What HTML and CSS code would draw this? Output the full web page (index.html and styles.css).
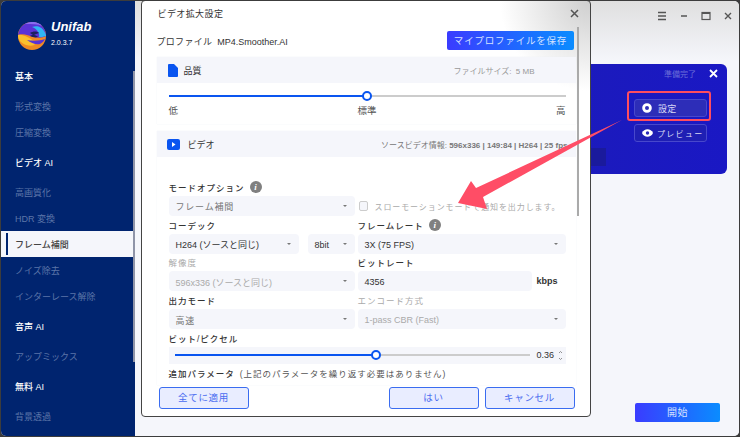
FILE: index.html
```html
<!DOCTYPE html>
<html lang="ja">
<head>
    <meta charset="UTF-8">
    <meta name="viewport" content="width=device-width, initial-scale=1.0">
    <title>Unifab</title>
    <link rel="stylesheet" href="styles.css">
</head>
<body>
    <div class="app">
        <!-- sidebar -->
        <div class="side">
            <div class="logo">
                <svg class="logo-mark" width="28" height="28" viewBox="0 0 28 28">
                    <circle cx="14" cy="14" r="14" fill="#f08a24"/>
                    <path d="M0 13C1 5 7 0 14 0c8 0 14 6 14 14-3 2-8 2-12 1-5-1-11-4-16-2z" fill="#5b33d6"/>
                    <path d="M7 2c5-3 13-3 17 2-4-2-10-2-17-2z" fill="#8a6cf0"/>
                    <path d="M14 5c6-2 11 0 14 8v1c-3 1-5 1-7 1 1-4-2-8-7-10z" fill="#2fb6f4"/>
                    <path d="M0 13c5-1 9 2 13 4 2 1 5 3 4 5-1 2-5 2-9 1-5-2-8-5-8-10z" fill="#fbc02d"/>
                    <path d="M9 18c5 1 13 1 18-1-1 2-3 4-5 5-4 1-9-1-13-4z" fill="#5b33d6"/>
                    <path d="M12 11c3-2 7-2 9 0-2 1-4 1-5 2 2 0 3 1 4 2-3 1-6 0-8-1 1-1 2-1 3-1-1-1-2-1-3-2z" fill="#1d2060"/>
                </svg>
                <div>
                    <div class="logo-name">Unifab</div>
                    <div class="logo-ver">2.0.3.7</div>
                </div>
            </div>
            <div class="side-head">基本</div>
            <div class="side-item">形式変換</div>
            <div class="side-item">圧縮変換</div>
            <div class="side-head">ビデオ AI</div>
            <div class="side-item">高画質化</div>
            <div class="side-item">HDR 変換</div>
            <div class="side-item active">フレーム補間</div>
            <div class="side-item">ノイズ除去</div>
            <div class="side-item">インターレース解除</div>
            <div class="side-head">音声 AI</div>
            <div class="side-item">アップミックス</div>
            <div class="side-head">無料 AI</div>
            <div class="side-item">背景透過</div>
            <div class="side-scroll"></div>
        </div>

        <!-- main -->
        <div class="main">
            <div class="titlebar">
                <svg width="10" height="10" viewBox="0 0 10 10"><path d="M1 1.5h8M1 5h8M1 8.5h8" stroke="#555" stroke-width="1.4"/></svg>
                <svg width="10" height="10" viewBox="0 0 10 10"><path d="M2 5h6" stroke="#555" stroke-width="1.4"/></svg>
                <svg width="10" height="10" viewBox="0 0 10 10"><rect x="1" y="1.5" width="8" height="7" fill="none" stroke="#555" stroke-width="1.2"/><path d="M1 2h8" stroke="#555" stroke-width="2"/></svg>
                <svg width="10" height="10" viewBox="0 0 10 10"><path d="M2 2l6 6M8 2l-6 6" stroke="#555" stroke-width="1.4"/></svg>
            </div>
            <div class="job">
                <div class="job-bar"></div>
                <div class="job-right">
                    <div class="job-top">
                        <span>準備完了</span>
                        <svg width="9" height="9" viewBox="0 0 9 9"><path d="M1 1l7 7M8 1l-7 7" stroke="#fff" stroke-width="1.8"/></svg>
                    </div>
                    <div class="job-btn">
                        <svg width="10" height="10" viewBox="0 0 10 10"><circle cx="5" cy="5" r="3.4" fill="none" stroke="#fff" stroke-width="2.8"/></svg>
                        <span>設定</span>
                    </div>
                    <div class="job-btn preview">
                        <svg width="11" height="8" viewBox="0 0 11 8"><path d="M0 4c2-5 9-5 11 0-2 5-9 5-11 0z" fill="#fff"/><circle cx="5.5" cy="4" r="1.7" fill="#2a2ab8"/></svg>
                        <span>プレビュー</span>
                    </div>
                </div>
            </div>
            <div class="start-row"><div class="start">開始</div></div>
        </div>

        <!-- dialog -->
        <div class="dialog">
            <div class="dlg-title">
                <span>ビデオ拡大設定</span>
                <svg width="9" height="9" viewBox="0 0 9 9"><path d="M1 1l7 7M8 1l-7 7" stroke="#555" stroke-width="1.5"/></svg>
            </div>
            <div class="profile">
                <span><span class="spaced">プロファイル</span>&nbsp; MP4.Smoother.AI</span>
                <div class="save">マイプロファイルを保存</div>
            </div>

            <div class="panel">
                <div class="panel-head">
                    <svg width="10" height="13" viewBox="0 0 10 13"><path d="M1 0h5l4 4v8a1 1 0 0 1-1 1H1a1 1 0 0 1-1-1V1a1 1 0 0 1 1-1z" fill="#0a55f0"/></svg>
                    <span class="panel-name">品質</span>
                    <span class="panel-info">ファイルサイズ: &nbsp;5 MB</span>
                </div>
                <div class="quality">
                    <div class="track"><div class="fill q-fill"></div><div class="thumb"></div></div>
                    <div class="scale"><span>低</span><span>標準</span><span>高</span></div>
                </div>
            </div>

            <div class="panel video">
                <div class="panel-head">
                    <svg width="13" height="11" viewBox="0 0 13 11"><rect width="13" height="11" rx="2" fill="#0a55f0"/><path d="M5 3l3.5 2.5L5 8z" fill="#fff"/></svg>
                    <span class="panel-name">ビデオ</span>
                    <span class="panel-info source">ソースビデオ情報: <b>596x336 | 149:84 | H264 | 25 fps</b></span>
                </div>
                <div class="form">
                    <div class="label">モードオプション <i class="info">i</i></div>
                    <div></div>
                    <div class="select dim"><span>フレーム補間</span></div>
                    <div class="check-row">
                        <span class="check"></span>
                        <span>スローモーションモードで通知を出力します。</span>
                    </div>

                    <div class="label">コーデック</div>
                    <div class="label">フレームレート <i class="info">i</i></div>
                    <div class="pair">
                        <div class="select grow"><span>H264 (ソースと同じ)</span></div>
                        <div class="select bit"><span>8bit</span></div>
                    </div>
                    <div class="select"><span>3X (75 FPS)</span></div>

                    <div class="label off">解像度</div>
                    <div class="label">ビットレート</div>
                    <div class="select off"><span>596x336 (ソースと同じ)</span></div>
                    <div class="pair">
                        <div class="input">4356</div>
                        <span class="unit">kbps</span>
                    </div>

                    <div class="label">出力モード</div>
                    <div class="label off">エンコード方式</div>
                    <div class="select dim"><span>高速</span></div>
                    <div class="select off"><span>1-pass CBR (Fast)</span></div>

                    <div class="label wide">ビット/ピクセル</div>
                    <div class="bpp wide">
                        <div class="track"><div class="fill b-fill"></div><div class="thumb"></div></div>
                        <span class="bpp-val">0.36</span>
                        <svg width="5" height="11" viewBox="0 0 5 11"><path d="M1 3l1.500-1.500L4 3M1 8l1.500 1.500L4 8" fill="none" stroke="#777" stroke-width="0.8"/></svg>
                    </div>
                    <div class="label wide extra">追加パラメータ <em>(上記のパラメータを繰り返す必要はありません)</em></div>
                </div>
            </div>
            <div class="dlg-scroll"></div>
            <div class="dlg-foot">
                <div class="ghost">全てに適用</div>
                <div class="foot-right">
                    <div class="ghost">はい</div>
                    <div class="ghost">キャンセル</div>
                </div>
            </div>
        </div>

        <!-- annotations -->
        <div class="mark"></div>
        <svg class="arrow" width="740" height="437" viewBox="0 0 740 437">
            <polygon points="458,203 471,181 476,188 622,120 483,197 487,209" fill="#ff4d66"/>
        </svg>
    </div>
</body>
</html>
```

FILE: styles.css
```css
* {
    padding: 0;
    margin: 0;
    box-sizing: border-box;
}
body {
    width: 740px;
    height: 437px;
    overflow: hidden;
    background: #3c3c3c;
    font-family: "Liberation Sans", "Noto Sans CJK JP", sans-serif;
    font-size: 9px;
    color: #333;
}
.app {
    position: relative;
    display: flex;
    width: 738px;
    height: 435px;
    margin: 1px;
    border-radius: 5px;
    overflow: hidden;
    background: #f5f6fb;
}

/* sidebar */
.side {
    position: relative;
    flex: none;
    width: 134px;
    padding-top: 13px;
    background: #00246f;
    color: #5c75a8;
}
.logo {
    position: relative;
    display: flex;
    align-items: center;
    gap: 5px;
    height: 45px;
    padding-left: 17px;
    color: #fff;
}
.logo-mark {
    flex: none;
    margin-top: -2px;
}
.logo-name {
    margin-top: -7px;
    font: italic bold 13px "Liberation Sans", sans-serif;
    line-height: 14px;
}
.logo-ver {
    margin-top: 5px;
    font: 7px "Liberation Sans", sans-serif;
}
.side-head {
    display: flex;
    align-items: center;
    height: 34px;
    padding-left: 14px;
    color: #fff;
    font-weight: 500;
}
.side-item {
    display: flex;
    align-items: center;
    height: 26px;
    padding-left: 14px;
}
.side-item.active {
    position: relative;
    margin-right: 1px;
    background: #f5f6fb;
    color: #444;
    font-weight: 500;
}
.side-item.active::before {
    content: "";
    position: absolute;
    left: 5px;
    top: 2px;
    width: 2px;
    height: 22px;
    background: #00246f;
}
.side-scroll {
    position: absolute;
    right: 0;
    top: 70px;
    width: 2px;
    height: 291px;
    background: #8f94a8;
}

/* main */
.main {
    flex: 1;
    display: flex;
    flex-direction: column;
    background: linear-gradient(#dfdfdf 0, #f5f6fb 60px);
}
.titlebar {
    display: flex;
    justify-content: flex-end;
    gap: 12px;
    height: 63px;
    padding: 10px 6px 0 0;
}
.job {
    display: flex;
    justify-content: flex-end;
    height: 110px;
    margin-right: 12px;
    margin-left: 290px;
    border-radius: 0 6px 6px 0;
    background: linear-gradient(90deg, #1d1db5, #1a18c4);
}
.job-bar {
    flex: 1;
    height: 18px;
    margin-top: 84px;
    margin-right: 28px;
    background: #1a1a9c;
}
.job-right {
    width: 93px;
    padding-right: 20px;
}
.job-top {
    display: flex;
    justify-content: space-between;
    align-items: center;
    height: 18px;
    margin: 0 -11px 17px 30px;
    color: #6a6ed8;
    font-size: 8px;
    white-space: nowrap;
}
.job-btn {
    display: flex;
    align-items: center;
    gap: 6px;
    width: 73px;
    height: 18px;
    margin-bottom: 7px;
    padding-left: 7px;
    border: 1px solid #4848cc;
    border-radius: 3px;
    background: #2d2db8;
    color: #d8d8f5;
    letter-spacing: 0.2px;
    white-space: nowrap;
}
.job-btn svg {
    flex: none;
}
.preview {
    gap: 4px;
    font-size: 8px;
    letter-spacing: 1.3px;
    background: #1f1fb4;
}
.start-row {
    display: flex;
    justify-content: flex-end;
    margin-top: auto;
    padding: 0 19px 14px 0;
}
.start {
    width: 85px;
    height: 19px;
    border-radius: 2px;
    background: linear-gradient(90deg, #3a3cff, #0a8cff);
    color: #d5e2ff;
    text-align: center;
    font-size: 10px;
    letter-spacing: 0.5px;
    line-height: 19px;
}

/* dialog */
.dialog {
    position: absolute;
    left: 140px;
    top: -1px;
    width: 450px;
    height: 417px;
    padding: 0 14px 0 14.5px;
    background: radial-gradient(circle at 100% 0, #cfcfcf 0, #fff 90px);
    border: 1.5px solid #444;
    border-radius: 4px;
}
.dlg-title {
    display: flex;
    justify-content: space-between;
    align-items: center;
    height: 25px;
    padding-left: 1px;
    letter-spacing: 0.4px;
}
.dlg-title svg {
    margin-right: -3px;
}
.profile {
    display: flex;
    justify-content: space-between;
    align-items: center;
    height: 20px;
    margin-top: 5px;
    padding-right: 2px;
}
.spaced {
    letter-spacing: 0.3px;
}
.save {
    width: 127px;
    height: 19px;
    margin-top: -1px;
    border-radius: 2px;
    background: linear-gradient(90deg, #3a3cff, #0a8cff);
    color: #d5e2ff;
    text-align: center;
    font-size: 9.5px;
    letter-spacing: 0.8px;
    line-height: 19px;
}
.panel {
    width: 419px;
    margin-top: 6px;
    box-shadow: 0 0 1px #e8e9f0;
}
.panel-head {
    display: flex;
    align-items: center;
    gap: 6px;
    height: 26px;
    padding-left: 11px;
    background: #f5f6fb;
}
.panel-name {
    padding-top: 1px;
}
.panel-info {
    margin-left: auto;
    padding-right: 41px;
    color: #999;
    font-size: 8px;
}
.panel-info.source {
    padding-right: 8px;
    color: #777;
    white-space: nowrap;
}
.quality {
    height: 41px;
    padding: 12px 10px 0 12px;
}
.track {
    position: relative;
    height: 2px;
    background: #ccc;
}
.fill {
    position: absolute;
    left: 0;
    top: 0;
    height: 2px;
    background: #0a55f0;
}
.thumb {
    position: absolute;
    top: -4px;
    width: 10px;
    height: 10px;
    border: 2px solid #0a55f0;
    border-radius: 50%;
    background: #fff;
}
.q-fill {
    width: 198px;
}
.quality .thumb {
    left: 193px;
}
.scale {
    display: flex;
    justify-content: space-between;
    margin-top: 6px;
    color: #555;
    font-size: 9.5px;
}
.video {
    height: 254px;
    margin-top: 7px;
    overflow: hidden;
}
.video .panel-head {
    gap: 8px;
    padding-left: 10px;
}
.form {
    display: grid;
    grid-template-columns: 186px 208px;
    column-gap: 3px;
    grid-auto-rows: min-content;
    padding: 21px 0 0 12px;
}
.label {
    display: flex;
    align-items: center;
    gap: 5px;
    height: 17.75px;
    color: #333;
    font-size: 8.5px;
    font-weight: 500;
    letter-spacing: 1px;
}
.label.off {
    color: #aaa;
    font-weight: normal;
}
.wide {
    grid-column: 1 / 3;
}
.info {
    display: inline-block;
    width: 12px;
    height: 12px;
    border-radius: 50%;
    background: #808080;
    color: #fff;
    font: italic bold 9px/12px "Liberation Serif", serif;
    text-align: center;
    letter-spacing: 0;
}
.select, .input {
    position: relative;
    display: flex;
    align-items: center;
    height: 20px;
    padding: 2px 0 0 7px;
    border-radius: 4px;
    background: #f5f6fb;
    color: #333;
    white-space: nowrap;
}
.select::after {
    content: "";
    position: absolute;
    right: 8px;
    top: 9px;
    border: 2px solid transparent;
    border-top: 2px solid #777;
}
.select.dim {
    color: #777;
    letter-spacing: 0.8px;
}
.select.off {
    color: #aaa;
}
.pair {
    display: flex;
    gap: 9px;
}
.grow {
    flex: 1;
}
.bit {
    width: 47px;
}
.input {
    width: 174px;
}
.unit {
    margin-left: -4px;
    font-weight: bold;
    line-height: 20px;
}
.check-row {
    display: flex;
    align-items: center;
    gap: 7px;
    padding-top: 1px;
    color: #aaa;
    font-size: 8px;
    letter-spacing: 0.9px;
    white-space: nowrap;
}
.check {
    width: 9px;
    height: 10px;
    margin-left: 1px;
    border: 1px solid #ccc;
    border-radius: 2px;
    background: #f5f6fb;
}
.bpp {
    display: flex;
    align-items: center;
    width: 397px;
    height: 17px;
    padding-left: 6px;
    background: #f5f6fb;
}
.bpp .track {
    width: 355px;
    flex: none;
}
.b-fill {
    width: 201px;
}
.bpp .thumb {
    left: 196px;
}
.bpp-val {
    margin: 0 4px 0 7px;
}
.extra {
    white-space: nowrap;
}
.extra em {
    color: #555;
    font-style: normal;
    font-weight: normal;
}
.dlg-scroll {
    position: absolute;
    left: 435px;
    top: 26px;
    width: 2px;
    height: 189px;
    background: #aaa;
}
.dlg-foot {
    display: flex;
    justify-content: space-between;
    width: 416px;
    margin: 2px 0 0 2px;
}
.foot-right {
    display: flex;
    gap: 6px;
}
.ghost {
    width: 90px;
    height: 22px;
    border: 1.5px solid #3a6cf0;
    border-radius: 3px;
    background: #e9edff;
    color: #4a6cf0;
    text-align: center;
    font-size: 9.5px;
    letter-spacing: 0.7px;
    line-height: 20px;
}

/* annotations */
.mark {
    position: absolute;
    left: 626px;
    top: 90px;
    width: 84px;
    height: 30px;
    border: 2px solid #ff4d5f;
    border-radius: 3px;
}
.arrow {
    position: absolute;
    left: -1px;
    top: -1px;
}
```
